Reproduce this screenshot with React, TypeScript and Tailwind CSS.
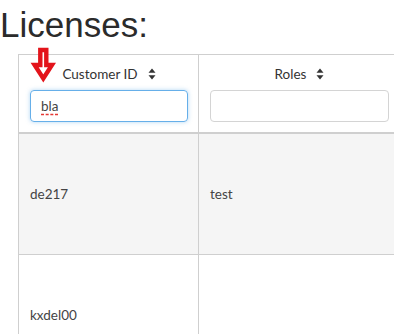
import React from 'react';

const SortIcon = () => (
  <svg width="8" height="12" viewBox="0 0 8 12" className="shrink-0">
    <path d="M4 0.5 L7.5 4.8 H0.5 Z" fill="#333" />
    <path d="M4 11.5 L7.5 7.2 H0.5 Z" fill="#333" />
  </svg>
);

export default function App() {
  return (
    <div
      className="relative w-[394px] h-[334px] overflow-hidden bg-white text-[#333]"
      style={{ fontFamily: 'Lato, "Open Sans", sans-serif' }}
    >
      {/* Title */}
      <div
        className="h-[54px] pt-[5px] text-[35px] leading-[40px] text-[#2b2b2b]"
        style={{ fontFamily: '"Liberation Sans", Arial, sans-serif' }}
      >
        Licenses:
      </div>

      {/* Table */}
      <div className="ml-[18px] w-[381px] border-l border-t border-[#cfcfcf] grid grid-cols-[180px_201px] text-[13.5px]">
        {/* Header */}
        <div className="border-r border-b-2 border-[#cfcfcf] pt-[9px] pb-[10px] px-[11px] pr-[10px] flex flex-col items-center">
          <div className="h-[20px] flex items-center gap-[10px]">
            <span>Customer ID</span>
            <SortIcon />
          </div>
          <div className="mt-[6px] w-full h-[32px] rounded-[4px] border border-[#66afe9] shadow-[0_0_4px_rgba(102,175,233,0.5)] flex items-center px-[10px]">
            <span className="underline decoration-dashed decoration-[#e53935] underline-offset-[3px] text-[#444]">bla</span>
          </div>
        </div>
        <div className="border-r border-b-2 border-[#cfcfcf] pt-[9px] pb-[10px] px-[11px] pr-[10px] flex flex-col items-center">
          <div className="h-[20px] flex items-center gap-[10px]">
            <span>Roles</span>
            <SortIcon />
          </div>
          <div className="mt-[6px] w-full h-[32px] rounded-[4px] border border-[#d4d4d4]" />
        </div>

        {/* Rows */}
        <div className="h-[121px] bg-[#f5f5f5] border-r border-b border-[#cfcfcf] px-[11px] flex items-center text-[#444]">
          de217
        </div>
        <div className="h-[121px] bg-[#f5f5f5] border-r border-b border-[#cfcfcf] px-[11px] flex items-center text-[#444]">
          test
        </div>
        <div className="h-[121px] border-r border-b border-[#cfcfcf] px-[11px] flex items-center text-[#444]">
          kxdel00
        </div>
        <div className="h-[121px] border-r border-b border-[#cfcfcf] px-[11px] flex items-center text-[#444]" />
      </div>

      {/* Red annotation arrow */}
      <svg
        width="26"
        height="38"
        viewBox="0 0 26 38"
        className="absolute left-[30px] top-[46px]"
      >
        <path
          d="M10.3 4 H16.3 V19 H22 L13.3 32.5 L4.6 19 H10.3 Z"
          fill="#fff"
          stroke="#e3141b"
          strokeWidth="4.4"
          strokeLinejoin="miter"
        />
      </svg>
    </div>
  );
}
